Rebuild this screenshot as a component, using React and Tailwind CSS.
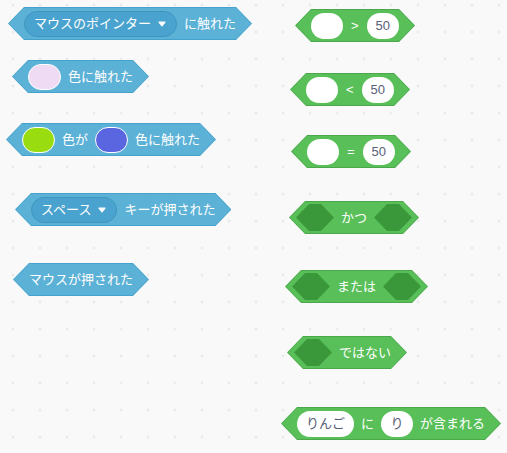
const HEX =
  "[clip-path:polygon(16px_0,calc(100%_-_16px)_0,100%_50%,calc(100%_-_16px)_100%,16px_100%,0_50%)]";
const HEX_IN =
  "[clip-path:polygon(15px_0,calc(100%_-_15px)_0,100%_50%,calc(100%_-_15px)_100%,15px_100%,0_50%)]";
const HEX_SLOT =
  "[clip-path:polygon(13px_0,calc(100%_-_13px)_0,100%_50%,calc(100%_-_13px)_100%,13px_100%,0_50%)]";

// One boolean (hexagon) block. Outer layer is the stroke, inner is the fill.
function Block({ tone, pad = "px-[15px]", className = "", children }) {
  const green = tone === "green";
  return (
    <div
      className={`flex w-fit p-px ${HEX} ${
        green ? "bg-[#4aa84a]" : "bg-[#45a2cc]"
      } ${className}`}
    >
      <div
        className={`flex h-[31px] items-center gap-[7px] text-[13px] leading-none text-white ${pad} ${HEX_IN} ${
          green ? "bg-[#59c059]" : "bg-[#5cb1d6]"
        }`}
      >
        {children}
      </div>
    </div>
  );
}

function Dropdown({ label }) {
  return (
    <div className="flex h-[26px] items-center gap-[7px] rounded-full border border-[#3f95bf] bg-[#4aa3ce] pl-[9px] pr-[10px]">
      <span>{label}</span>
      <svg width="8" height="6" viewBox="0 0 8 6">
        <path
          d="M1 1.2 L7 1.2 L4 4.8 Z"
          fill="#fff"
          stroke="#fff"
          strokeWidth="1.2"
          strokeLinejoin="round"
        />
      </svg>
    </div>
  );
}

function Swatch({ color }) {
  return (
    <div className={`h-[26px] w-[33px] rounded-full border border-white ${color}`} />
  );
}

function Oval({ children }) {
  return (
    <div className="flex h-[26px] min-w-[32px] items-center justify-center rounded-full bg-white px-[9px] text-[#575e75]">
      {children}
    </div>
  );
}

function Slot() {
  return <div className={`h-[27px] w-[38px] shrink-0 bg-[#3a983a] ${HEX_SLOT}`} />;
}

export default function App() {
  return (
    <div className="flex h-[453px] w-[507px] overflow-hidden bg-[#f9f9f9] font-['Liberation_Sans','Noto_Sans_CJK_JP',sans-serif] [background-image:radial-gradient(circle,#e2e2e2_0.9px,transparent_1.4px)] [background-size:27px_27px] [background-position:-0.5px_-8.5px]">
      <div className="flex w-[280px] flex-col">
        <Block tone="blue" className="ml-[8px] mt-[7px]">
          <Dropdown label="マウスのポインター" />
          <span>に触れた</span>
        </Block>
        <Block tone="blue" className="ml-[12px] mt-[20px]">
          <Swatch color="bg-[#f0dbf5]" />
          <span>色に触れた</span>
        </Block>
        <Block tone="blue" className="ml-[6px] mt-[30px]">
          <Swatch color="bg-[#99dd11]" />
          <span>色が</span>
          <Swatch color="bg-[#5a66e0]" />
          <span>色に触れた</span>
        </Block>
        <Block tone="blue" className="ml-[15px] mt-[37px]">
          <Dropdown label="スペース" />
          <span>キーが押された</span>
        </Block>
        <Block tone="blue" className="ml-[13px] mt-[37px]">
          <span>マウスが押された</span>
        </Block>
      </div>

      <div className="flex flex-col">
        <Block tone="green" className="ml-[15px] mt-[9px]">
          <Oval />
          <span className="px-px">&gt;</span>
          <Oval>50</Oval>
        </Block>
        <Block tone="green" className="ml-[10px] mt-[31px]">
          <Oval />
          <span className="px-px">&lt;</span>
          <Oval>50</Oval>
        </Block>
        <Block tone="green" className="ml-[11px] mt-[29px]">
          <Oval />
          <span className="px-px">=</span>
          <Oval>50</Oval>
        </Block>
        <Block tone="green" pad="px-[6px]" className="ml-[9px] mt-[33px]">
          <Slot />
          <span>かつ</span>
          <Slot />
        </Block>
        <Block tone="green" pad="px-[6px]" className="ml-[5px] mt-[36px]">
          <Slot />
          <span>または</span>
          <Slot />
        </Block>
        <Block tone="green" pad="pl-[6px] pr-[15px]" className="ml-[7px] mt-[33px]">
          <Slot />
          <span>ではない</span>
        </Block>
        <Block tone="green" className="ml-[1px] mt-[38px]">
          <Oval>りんご</Oval>
          <span>に</span>
          <Oval>り</Oval>
          <span>が含まれる</span>
        </Block>
      </div>
    </div>
  );
}
